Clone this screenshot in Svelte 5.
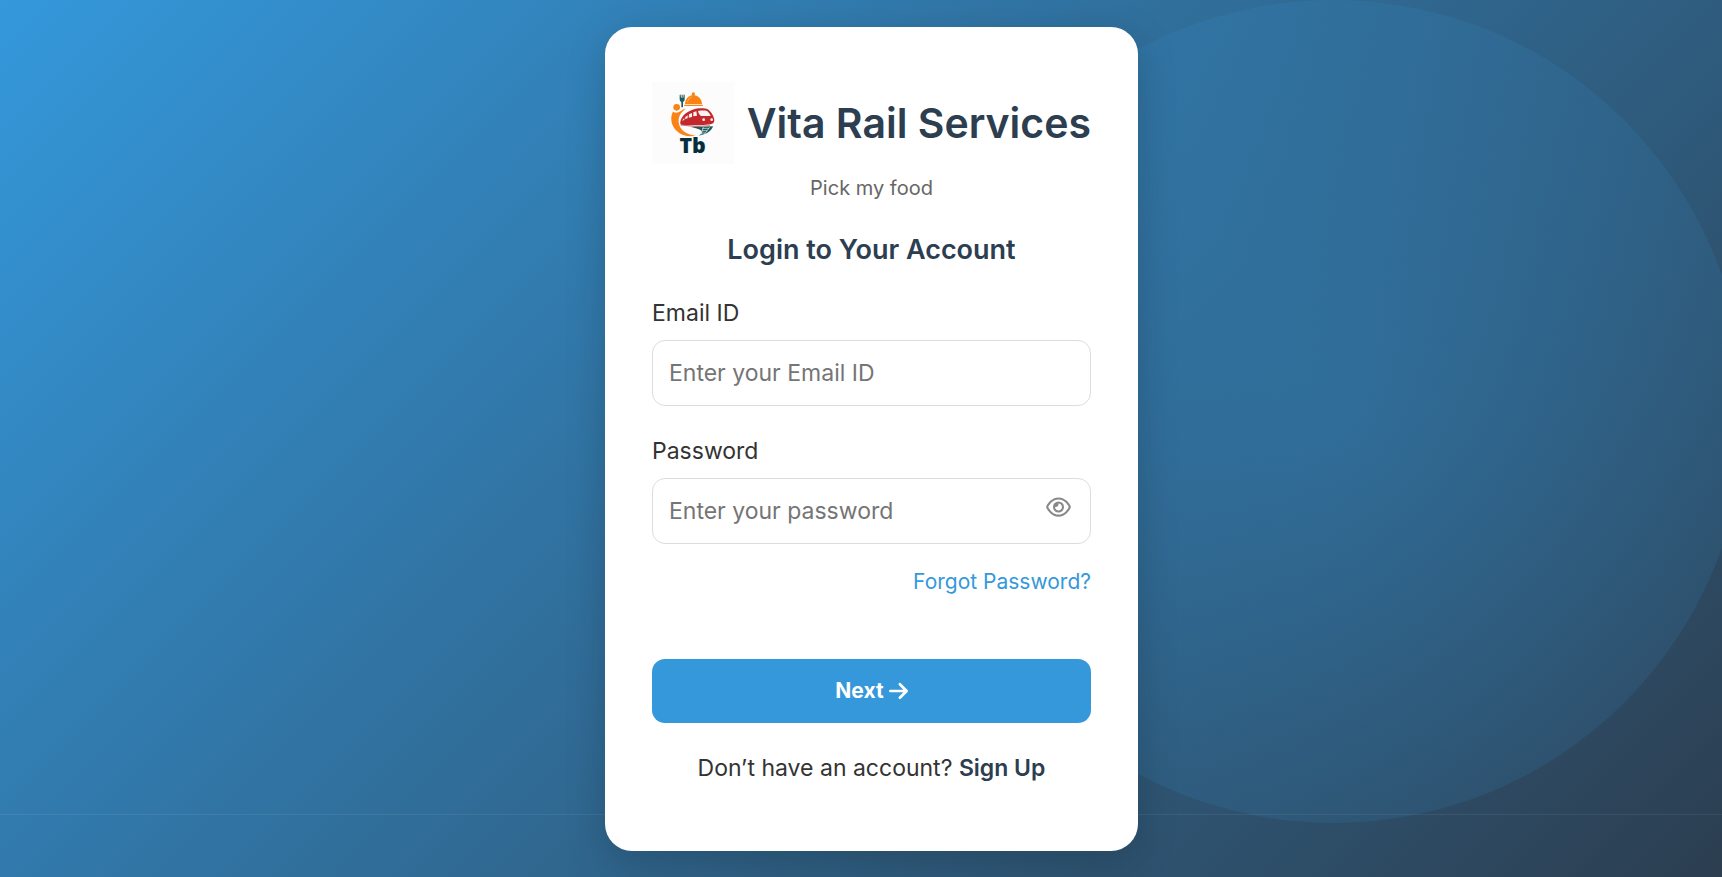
<script>
  let email = $state('');
  let password = $state('');
  let visible = $state(false);
</script>

<main class="page">
  <div class="glow" aria-hidden="true"></div>
  <div class="track" aria-hidden="true"></div>

  <section class="card">
    <header class="brand">
      <svg class="logo" viewBox="36 21 246 246" aria-hidden="true">
        <rect x="36" y="21" width="246" height="246" fill="#fcfcfc" />
        <!-- spoon -->
        <path d="M119 61c0-2 2-3 3-2l1 9h2v-9h3v9h2l1-9c2-1 3 0 3 2v11c0 5-2 8-5 9v16h-5V81c-3-1-5-4-5-9z" fill="#1d5a5c" />
        <!-- dish cover -->
        <circle cx="160" cy="57" r="5" fill="#f98316" />
        <path d="M135 87c1-16 12-27 25-27s25 11 26 27z" fill="#f98316" />
        <path d="M142 82c2-8 6-13 12-16" fill="none" stroke="#fcc58b" stroke-width="2" />
        <rect x="132" y="89" width="57" height="4" rx="2" fill="#f98316" />
        <!-- figure -->
        <circle cx="110" cy="97" r="10" fill="#f98316" />
        <path d="M99 110c6 4 15 4 22-1 5-4 9-7 16-8-11 8-19 18-21 31-2 18 7 33 23 42 9 5 18 7 29 7-12 4-25 4-36 0-22-8-37-26-38-46-1-9 1-18 5-25z" fill="#f98316" />
        <!-- train -->
        <path d="M121 142c2-17 16-31 37-38 15-5 37-5 45-1 9 5 20 22 20 33 0 7-4 11-11 12-28 4-59 3-88 1-3-1-4-3-3-7z" fill="#c3282c" />
        <path d="M174 108c10-2 21-2 27 0 5 3 9 9 11 15h-29c-5-4-8-9-9-15z" fill="#fcf3f2" />
        <path d="M160 112l9-3 2 13-11 2zM147 118l9-4v12l-10 2zM136 126l7-5v9l-8 2zM128 134l5-5v6l-6 2z" fill="#fcf3f2" />
        <circle cx="191" cy="134" r="4" fill="#fcf3f2" />
        <circle cx="215" cy="134" r="4" fill="#fcf3f2" />
        <path d="M122 150q44 8 88 2" fill="none" stroke="#c3282c" stroke-width="2" />
        <!-- track under the train -->
        <path d="M153 156c24 0 45-1 66-2-4 14-20 25-43 28 8-5 11-9 9-13-2-6-14-8-32-13z" fill="#1d5a5c" />
        <path d="M186 160h21M185 167h17M181 174h15M190 157l-7 22M209 157l-15 20" fill="none" stroke="#e4eeee" stroke-width="2" />
        <text x="158" y="235" text-anchor="middle" class="mark">Tb</text>
      </svg>
      <h1>Vita Rail Services</h1>
    </header>
    <p class="tagline">Pick my food</p>
    <h2>Login to Your Account</h2>

    <form onsubmit={(e) => e.preventDefault()}>
      <label for="email">Email ID</label>
      <div class="field">
        <input id="email" type="text" placeholder="Enter your Email ID" bind:value={email} />
      </div>

      <label for="password">Password</label>
      <div class="field">
        <input id="password" type={visible ? 'text' : 'password'} placeholder="Enter your password" bind:value={password} />
        <button class="eye" type="button" aria-label="Show password" onclick={() => (visible = !visible)}>
          <svg viewBox="0 0 576 512" aria-hidden="true">
            <path d="M288 80c-65.2 0-118.8 29.6-159.9 67.7C89.6 183.5 63 226 49.4 256c13.6 30 40.2 72.5 78.6 108.3C169.2 402.4 222.8 432 288 432s118.8-29.6 159.9-67.7C486.4 328.5 513 286 526.6 256c-13.6-30-40.2-72.5-78.6-108.3C406.8 109.6 353.2 80 288 80zM95.4 112.6C142.5 68.8 207.2 32 288 32s145.5 36.8 192.6 80.6c46.8 43.5 78.1 95.4 93 131.1c3.3 7.9 3.3 16.7 0 24.6c-14.9 35.7-46.2 87.7-93 131.1C433.5 443.2 368.8 480 288 480s-145.5-36.8-192.6-80.6C48.6 356 17.3 304 2.5 268.3c-3.3-7.9-3.3-16.7 0-24.6C17.3 208 48.6 156 95.4 112.6zM288 336c44.2 0 80-35.8 80-80s-35.8-80-80-80c-.7 0-1.3 0-2 0c1.3 5.1 2 10.5 2 16c0 35.3-28.7 64-64 64c-5.5 0-10.9-.7-16-2c0 .7 0 1.3 0 2c0 44.2 35.8 80 80 80zm0-208a128 128 0 1 1 0 256 128 128 0 1 1 0-256z" />
          </svg>
        </button>
      </div>

      <a class="forgot" href="#forgot">Forgot Password?</a>

      <button class="next" type="submit">
        Next
        <svg viewBox="0 0 448 512" aria-hidden="true">
          <path d="M438.6 278.6c12.5-12.5 12.5-32.8 0-45.3l-160-160c-12.5-12.5-32.8-12.5-45.3 0s-12.5 32.8 0 45.3L338.8 224 32 224c-17.7 0-32 14.3-32 32s14.3 32 32 32l306.7 0L233.4 393.4c-12.5 12.5-12.5 32.8 0 45.3s32.8 12.5 45.3 0l160-160z" />
        </svg>
      </button>
    </form>

    <p class="signup">Don’t have an account? <a href="#signup">Sign Up</a></p>
  </section>
</main>

<style>
  .page {
    position: relative;
    box-sizing: border-box;
    display: flex;
    align-items: center;
    justify-content: center;
    min-height: 100vh;
    padding: 24px 0 24px 21px;
    overflow: hidden;
    background: linear-gradient(135deg, #3498db, #2c3e50);
    color: #333;
    font-family: Inter, sans-serif;
    font-size: 20px;
    line-height: 32px;
  }

  .glow {
    position: absolute;
    top: 0;
    right: -23px;
    width: 823px;
    height: 823px;
    border-radius: 50%;
    background: radial-gradient(circle, rgba(52, 152, 219, 0.3), rgba(52, 152, 219, 0.05));
  }

  .track {
    position: absolute;
    right: 0;
    bottom: 62px;
    left: 0;
    height: 1px;
    background: rgba(255, 255, 255, 0.07);
  }

  .card {
    position: relative;
    box-sizing: border-box;
    width: 100%;
    max-width: 533px;
    padding: 55px 47px 67px;
    border-radius: 27px;
    background: #fff;
    box-shadow: 0 11px 40px rgba(0, 0, 0, 0.18);
  }

  .brand {
    display: flex;
    align-items: center;
    justify-content: space-between;
  }

  .logo {
    flex: none;
    width: 82px;
    height: 82px;
  }

  .mark {
    fill: #062f3d;
    font-family: "Open Sans", sans-serif;
    font-size: 64px;
    font-weight: 800;
  }

  h1,
  h2,
  p {
    margin: 0;
  }

  h1 {
    color: #2c3e50;
    font-size: 41px;
    font-weight: 600;
    line-height: 48px;
    white-space: nowrap;
  }

  .tagline {
    margin-top: 8px;
    color: #666;
    text-align: center;
  }

  h2 {
    margin: 26px 0 27px;
    color: #2c3e50;
    font-size: 27px;
    font-weight: 600;
    line-height: 40px;
    text-align: center;
  }

  form {
    display: flex;
    flex-direction: column;
  }

  label {
    margin-bottom: 11px;
    font-size: 23px;
  }

  .field {
    position: relative;
    display: flex;
    margin-bottom: 29px;
  }

  .field input {
    box-sizing: border-box;
    width: 100%;
    height: 66px;
    padding: 0 16px;
    border: 1px solid #ddd;
    border-radius: 13px;
    outline: none;
    background: #fff;
    color: #333;
    font: inherit;
    font-size: 23px;
  }

  .field input::placeholder {
    color: #757575;
    opacity: 1;
  }

  .eye {
    position: absolute;
    top: 16px;
    right: 20px;
    display: flex;
    padding: 2px 0;
    border: 0;
    background: none;
    cursor: pointer;
  }

  .eye svg {
    width: 25px;
    height: 22px;
    fill: #888;
  }

  .forgot {
    align-self: flex-end;
    margin: -7px 0 61px;
    color: #3498db;
    font-size: 21px;
    text-decoration: none;
  }

  .next {
    display: flex;
    align-items: center;
    justify-content: center;
    gap: 5px;
    height: 64px;
    padding: 0;
    border: 0;
    border-radius: 13px;
    background: #3498db;
    color: #fff;
    font: inherit;
    font-size: 21px;
    font-weight: 700;
    cursor: pointer;
  }

  .next svg {
    width: 19px;
    height: 22px;
    fill: #fff;
  }

  .signup {
    margin-top: 29px;
    font-size: 23px;
    text-align: center;
  }

  .signup a {
    color: #2c3e50;
    font-weight: 600;
    text-decoration: none;
  }
</style>
